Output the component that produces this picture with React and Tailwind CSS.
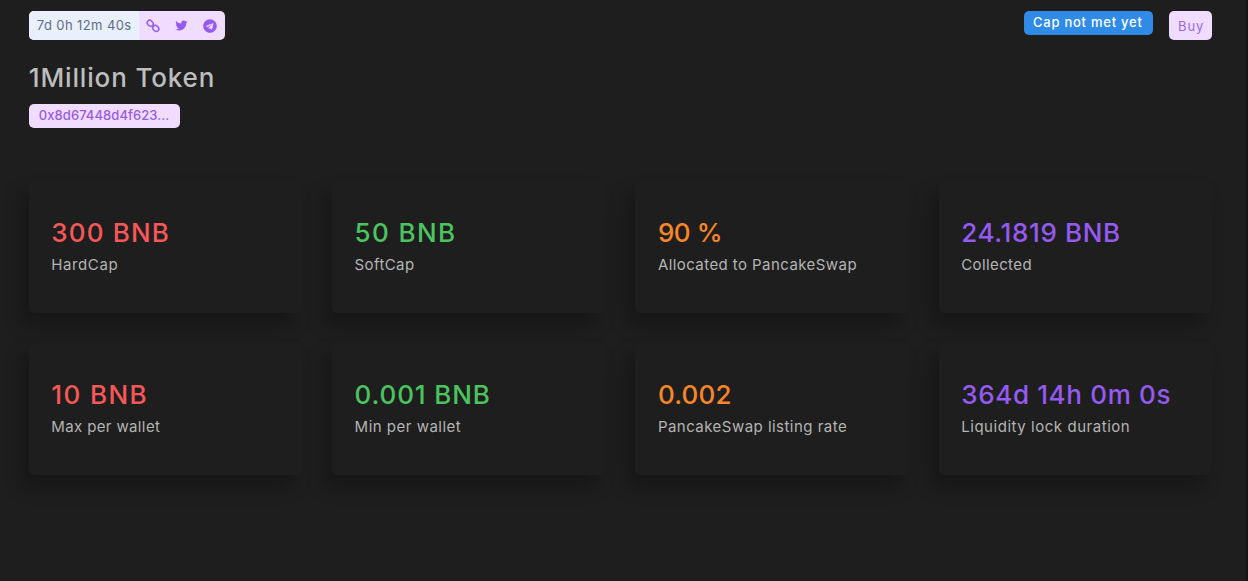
import { BiLogoTwitter } from "react-icons/bi";
import { FaTelegram } from "react-icons/fa";

const stats = [
  { value: "300 BNB", label: "HardCap", color: "text-[#f85858]", valueSpacing: "tracking-[1.15px]", labelSpacing: "tracking-[0.6px]" },
  { value: "50 BNB", label: "SoftCap", color: "text-[#4bc460]", valueSpacing: "tracking-[1.4px]", labelSpacing: "tracking-[0.4px]" },
  { value: "90 %", label: "Allocated to PancakeSwap", color: "text-[#f98629]", valueSpacing: "tracking-[-0.4px]", labelSpacing: "tracking-[0.43px]" },
  { value: "24.1819 BNB", label: "Collected", color: "text-[#955af2]", valueSpacing: "tracking-[0.65px]", labelSpacing: "tracking-[0.4px]" },
  { value: "10 BNB", label: "Max per wallet", color: "text-[#f85858]", valueSpacing: "tracking-[1.4px]", labelSpacing: "tracking-[0.37px]" },
  { value: "0.001 BNB", label: "Min per wallet", color: "text-[#4bc460]", valueSpacing: "tracking-[0.85px]", labelSpacing: "tracking-[0.5px]" },
  { value: "0.002", label: "PancakeSwap listing rate", color: "text-[#f98629]", valueSpacing: "tracking-[0.2px]", labelSpacing: "tracking-[0.47px]" },
  { value: "364d 14h 0m 0s", label: "Liquidity lock duration", color: "text-[#955af2]", valueSpacing: "tracking-[0.65px]", labelSpacing: "tracking-[0.54px]" },
];

function LinkIcon() {
  return (
    <svg className="h-[14px] w-[14px]" viewBox="0 0 14 14" fill="none" stroke="currentColor" strokeWidth="1.5">
      <rect x="1" y="1.7" width="6.4" height="5" rx="2.5" transform="rotate(45 4.2 4.2)" />
      <rect x="6.6" y="6.9" width="6.4" height="5" rx="2.5" transform="rotate(45 9.8 9.4)" />
    </svg>
  );
}

function StatCard({ stat }) {
  return (
    <div className="h-[132px] rounded-[5px] bg-[#1e1e1e] px-[22.5px] pt-[34px] shadow-[-8px_12px_18px_0_rgba(0,0,0,0.25)]">
      <h2 className={`whitespace-nowrap text-[26px] leading-9 font-[450] ${stat.color} ${stat.valueSpacing}`}>
        {stat.value}
      </h2>
      <p className={`mt-[3px] whitespace-nowrap text-[15px] leading-[22px] text-[#b4b4b4] ${stat.labelSpacing}`}>{stat.label}</p>
    </div>
  );
}

export default function App() {
  return (
    <div className="h-[581px] overflow-hidden border-r-2 border-[#151515] bg-[#1e1e1e] pt-[11px] pr-[34px] pl-[28.8px] font-[Inter,sans-serif]">
      <div className="flex items-start justify-between">
        <div className="flex h-[29px] overflow-hidden rounded-[5px] bg-[#efdcff] text-[13px] leading-[29px]">
          <div className="w-[110px] bg-[#e9f0fb] pl-2 tracking-[0.4px] whitespace-nowrap text-[#5a6f88]">
            <span>7d 0h 12m 40s</span>
          </div>
          <div className="flex w-[86px] items-center gap-[14px] pl-[7px] text-[#955af2]">
            <LinkIcon />
            <BiLogoTwitter size={15} />
            <FaTelegram size={14} />
          </div>
        </div>
        <div className="flex items-start gap-4">
          <div className="h-6 w-[129px] rounded-[5px] bg-[#2f8be6] pl-[9px] text-[13px] leading-[23px] font-medium tracking-[0.75px] whitespace-nowrap text-white">
            <span>Cap not met yet</span>
          </div>
          <button className="h-[29px] w-[43px] rounded-[5px] bg-[#efdcff] pl-[9px] pt-0.5 text-left text-[13px] tracking-[0.9px] text-[#a066dc]">
            <span>Buy</span>
          </button>
        </div>
      </div>

      <h1 className="mt-5 text-[26px] leading-9 font-[450] tracking-[0.85px] text-[#bdbdbd]">
        <span>1Million Token</span>
      </h1>
      <div className="mt-2 h-6 w-[151px] rounded-[5px] bg-[#efdcff] pl-[10px] text-[13px] leading-[23px] font-medium tracking-[0.06px] text-[#9a5be0]">
        <span>0x8d67448d4f623...</span>
      </div>

      <div className="mt-[53px] grid grid-cols-4 gap-[30px]">
        {stats.map((stat) => (
          <StatCard key={stat.label} stat={stat} />
        ))}
      </div>
    </div>
  );
}
